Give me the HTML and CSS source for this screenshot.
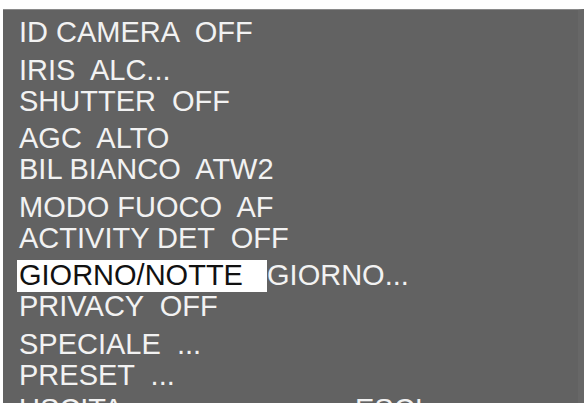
FILE: index.html
```html
<!DOCTYPE html>
<html lang="it">
<head>
<meta charset="utf-8">
<title>Menu OSD</title>
<link rel="stylesheet" href="styles.css">
</head>
<body>
<div class="screen">
  <ul class="menu">
    <li class="row">ID CAMERA  OFF</li>
    <li class="row">IRIS  ALC...</li>
    <li class="row">SHUTTER  OFF</li>
    <li class="row">AGC  ALTO</li>
    <li class="row">BIL BIANCO  ATW2</li>
    <li class="row">MODO FUOCO  AF</li>
    <li class="row">ACTIVITY DET  OFF</li>
    <li class="row"><span class="sel">GIORNO/NOTTE  </span>GIORNO...</li>
    <li class="row">PRIVACY  OFF</li>
    <li class="row">SPECIALE  ...</li>
    <li class="row">PRESET  ...</li>
    <li class="row row-last"><span class="key">USCITA</span>ESCI</li>
  </ul>
</div>
</body>
</html>
```
FILE: styles.css
```css
html, body {
  margin: 0;
  padding: 0;
  background: #ffffff;
  width: 584px;
  height: 403px;
  overflow: hidden;
}
.screen {
  margin: 9px 0 0 3px;
  height: 394px;
  background: #626262;
  border-top: 1px solid #8a8a8a;
  box-sizing: border-box;
  border-right: 6px solid #676767;
  overflow: hidden;
}
.menu {
  list-style: none;
  margin: 0;
  padding: 7px 0 0 16px;
  font-family: "Liberation Sans", Arial, sans-serif;
  font-size: 29px;
  color: #f2f2f2;
}
.row {
  white-space: pre;
  line-height: 31px;
  height: 31px;
}
.row:nth-child(2n) {
  margin-top: 6.6px;
}
.row.row-last {
  margin-top: 3px;
}
.sel {
  display: inline-block;
  background: #ffffff;
  color: #111111;
  margin-left: -2px;
  padding: 0 8px 0 2px;
  height: 32px;
  vertical-align: top;
}
.key {
  display: inline-block;
  width: 336px;
}
```
